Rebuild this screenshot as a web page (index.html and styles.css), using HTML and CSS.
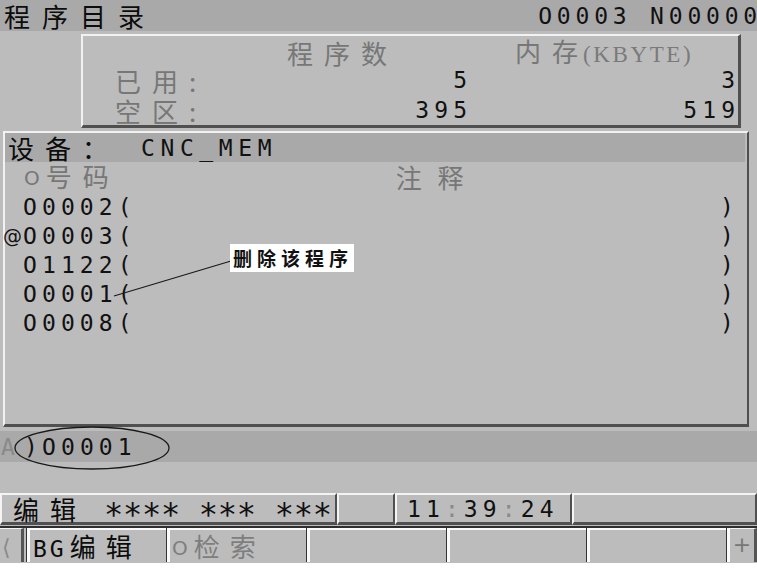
FILE: index.html
```html
<!DOCTYPE html>
<html lang="zh-CN">
<head>
<meta charset="utf-8">
<title>程序目录</title>
<link rel="stylesheet" href="styles.css">
</head>
<body>
<div class="screen">
  <div class="title">
    <span class="title-cn">程序目录</span>
    <span class="mono title-no">O0003 N00000</span>
  </div>

  <div class="info">
    <div class="info-row head">
      <span></span>
      <span class="h-count">程序数</span>
      <span class="h-mem">内存<span class="kb">(KBYTE)</span></span>
    </div>
    <div class="info-row">
      <span class="lbl">已用:</span>
      <span class="val"><span class="mono">5</span></span>
      <span class="val"><span class="mono">3</span></span>
    </div>
    <div class="info-row">
      <span class="lbl">空区:</span>
      <span class="val"><span class="mono">395</span></span>
      <span class="val"><span class="mono">519</span></span>
    </div>
  </div>

  <div class="device">
    <div class="dev-head"><span class="dev-lbl">设备：</span><span class="mono dev-name">CNC_MEM</span></div>
    <div class="col-head"><span class="col-no"><span class="o-mark">O</span>号码</span><span class="col-cmt">注 释</span></div>
    <div class="prog"><span class="mark"></span><span class="mono">O0002(</span><span class="mono close">)</span></div>
    <div class="prog"><span class="mark">@</span><span class="mono">O0003(</span><span class="mono close">)</span></div>
    <div class="prog"><span class="mark"></span><span class="mono">O1122(</span><span class="mono close">)</span></div>
    <div class="prog"><span class="mark"></span><span class="mono">O0001(</span><span class="mono close">)</span></div>
    <div class="prog"><span class="mark"></span><span class="mono">O0008(</span><span class="mono close">)</span></div>
  </div>

  <div class="input-line"><span class="mono prompt-a">A</span><span class="mono prompt-g">)</span><span class="mono">O0001</span></div>

  <div class="status">
    <div class="st st-mode"><span class="st-cn">编辑</span><span class="stars">**** *** ***</span></div>
    <div class="st st-b"></div>
    <div class="st st-time"><span class="mono">11<span class="colon">:</span>39<span class="colon">:</span>24</span></div>
    <div class="st st-d"></div>
  </div>

  <div class="softkeys">
    <div class="sk-left">⟨</div>
    <div class="tab"><span class="mono bg">BG</span>编辑</div>
    <div class="tab dim"><span class="o-mark">O</span>检索</div>
    <div class="tab"></div>
    <div class="tab"></div>
    <div class="tab"></div>
    <div class="sk-right">+</div>
  </div>

  <svg class="overlay" width="757" height="579" viewBox="0 0 757 579">
    <line x1="114" y1="296" x2="231" y2="261" stroke="#1a1a1a" stroke-width="1.3"/>
    <ellipse cx="92" cy="448" rx="77" ry="21" fill="none" stroke="#1a1a1a" stroke-width="1.3"/>
  </svg>
  <div class="callout">删除该程序</div>
</div>
</body>
</html>
```
FILE: styles.css
```css
* { box-sizing: border-box; }
html, body { margin: 0; padding: 0; background: #ffffff; }
body {
  font-family: "Noto Sans CJK SC", "Noto Sans", sans-serif;
  width: 757px;
  height: 579px;
  overflow: hidden;
}
.mono {
  font-family: "DejaVu Sans Mono", "Liberation Mono", monospace;
  font-size: 23px;
  letter-spacing: 5.1px;
}
.screen {
  position: relative;
  height: 563px;
  background: #bcbcbc;
  display: flex;
  flex-direction: column;
  color: #111;
}

/* title */
.title {
  height: 31px;
  background: #a9a9a9;
  display: flex;
  justify-content: space-between;
  align-items: center;
  white-space: nowrap;
}
.title-cn {
  padding-left: 4px;
  font-size: 26px;
  letter-spacing: 12px;
  line-height: 30px;
  color: #0c0c0c;
}
.title-no { margin-right: -5px; color: #111; line-height: 30px; letter-spacing: 4.8px; }

/* info box */
.info {
  margin: 3px 0 0 81px;
  width: 660px;
  height: 94px;
  border-style: solid;
  border-width: 2px 3px 3px 2px;
  border-color: #f2f2f2 #505050 #505050 #f2f2f2;
  padding-right: 3px;
}
.info-row {
  display: grid;
  grid-template-columns: 152px 232px 1fr;
  height: 30px;
  align-items: center;
  white-space: nowrap;
}
.info-row.head { height: 29px; }
.h-count, .h-mem, .lbl {
  color: #777;
  font-size: 26px;
  letter-spacing: 11px;
  line-height: 29px;
}
.h-count { padding-left: 52px; }
.h-mem { padding-left: 48px; }
.kb {
  font-family: "Liberation Serif", serif;
  font-size: 23px;
  letter-spacing: 2.6px;
  color: #7a7a7a;
  margin-left: -6px;
}
.lbl { padding-left: 32px; }
.val { text-align: right; }
.val .mono { margin-right: -5.1px; }

/* device panel */
.device {
  margin: 3px 0 0 3px;
  width: 746px;
  height: 296px;
  border-style: solid;
  border-width: 2px 2px 3px 2px;
  border-color: #f2f2f2 #505050 #505050 #f2f2f2;
  padding-right: 2px;
}
.dev-head {
  height: 29px;
  background: #a9a9a9;
  display: flex;
  align-items: center;
  white-space: nowrap;
}
.dev-lbl {
  padding-left: 3px;
  font-size: 26px;
  letter-spacing: 11px;
  line-height: 28px;
  color: #0c0c0c;
}
.dev-name { margin-left: 22px; letter-spacing: 5.6px; }
.col-head {
  height: 30px;
  display: flex;
  align-items: center;
  color: #777;
  font-size: 26px;
  line-height: 28px;
  white-space: nowrap;
}
.col-no { padding-left: 19px; letter-spacing: 11px; }
.o-mark {
  font-family: "DejaVu Sans", sans-serif;
  font-size: 20px;
  letter-spacing: 6px;
  vertical-align: 2px;
}
.col-cmt { margin-left: 276px; letter-spacing: 5px; }
.prog {
  height: 29px;
  display: flex;
  align-items: center;
  padding-right: 6px;
  white-space: nowrap;
}
.mark {
  width: 18px;
  margin-left: -2px;
  margin-right: 2px;
  font-family: "DejaVu Sans", sans-serif;
  font-size: 19px;
  color: #111;
}
.close { margin-left: auto; }

/* input line */
.input-line {
  margin-top: 4px;
  height: 31px;
  background: #a9a9a9;
  display: flex;
  align-items: center;
  white-space: nowrap;
}
.prompt-a { color: #8a8a8a; padding-left: 1px; letter-spacing: 0; width: 24px; }
.prompt-g { letter-spacing: 0; width: 18px; }

/* status bar */
.status {
  margin-top: 31px;
  height: 32px;
  display: flex;
}
.st {
  height: 32px;
  border-style: solid;
  border-width: 2px 2px 3px 2px;
  border-color: #f4f4f4 #505050 #505050 #f4f4f4;
  display: flex;
  align-items: center;
  white-space: nowrap;
}
.st-mode { width: 337px; padding-left: 11px; }
.st-b { width: 58px; }
.st-time { width: 177px; padding-left: 10px; }
.st-d { flex: 1; }
.st-cn { font-size: 26px; letter-spacing: 11px; color: #0c0c0c; margin-right: 17px; line-height: 27px; }
.stars {
  font-family: "DejaVu Sans Mono", monospace;
  font-size: 32px;
  letter-spacing: -0.3px;
  line-height: 16px;
  padding-top: 11px;
  color: #111;
}
.colon { color: #8a8a8a; }

/* soft keys */
.softkeys {
  margin-top: 1px;
  height: 36px;
  border-top: 2px solid #2e2e2e;
  display: flex;
}
.sk-left {
  width: 24px;
  border-right: 3px solid #555;
  border-top: 1px solid #f4f4f4;
  color: #8a8a8a;
  font-size: 22px;
  line-height: 32px;
  padding-left: 2px;
  margin-right: 3px;
}
.tab {
  width: 140px;
  border-left: 3px solid #fafafa;
  border-top: 2px solid #fafafa;
  box-shadow: -1px 0 0 #333;
  font-size: 26px;
  letter-spacing: 10px;
  line-height: 31px;
  padding-left: 3px;
  white-space: nowrap;
  color: #0c0c0c;
}
.tab.dim { color: #7e7e7e; padding-left: 2px; }
.tab .bg { letter-spacing: 3px; margin-right: 3px; }
.sk-right {
  width: 30px;
  margin-left: 0;
  border-left: 3px solid #fafafa;
  box-shadow: -1px 0 0 #333;
  border-right: 3px solid #555;
  border-top: 1px solid #f4f4f4;
  color: #777;
  font-family: "DejaVu Sans", sans-serif;
  font-size: 22px;
  line-height: 32px;
  text-align: center;
}

/* annotation overlay */
.overlay {
  position: absolute;
  left: 0;
  top: 0;
  pointer-events: none;
}
.callout {
  position: absolute;
  left: 230px;
  top: 244px;
  width: 124px;
  height: 28px;
  background: #ffffff;
  font-size: 19px;
  font-weight: 700;
  letter-spacing: 5px;
  line-height: 28px;
  padding-left: 3px;
  color: #111;
  white-space: nowrap;
}
```
